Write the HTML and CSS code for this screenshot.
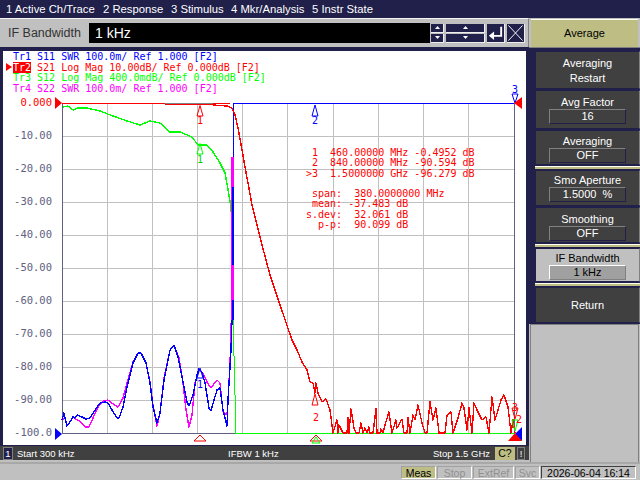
FILE: index.html
```html
<!DOCTYPE html>
<html lang="en">
<head>
<meta charset="utf-8">
<title>Network Analyzer</title>
<link rel="stylesheet" href="styles.css">
</head>
<body>
<div class="app">
  <nav class="menu">
    <span class="menu-item m1">1 Active Ch/Trace</span>
    <span class="menu-item m2">2 Response</span>
    <span class="menu-item m3">3 Stimulus</span>
    <span class="menu-item m4">4 Mkr/Analysis</span>
    <span class="menu-item">5 Instr State</span>
  </nav>
  <div class="main">
    <div class="left">
      <div class="entry">
        <span class="entry-label">IF Bandwidth</span>
        <span class="entry-field">1 kHz</span>
        <div class="spin narrow">
          <span class="spin-btn"><svg viewBox="0 0 5 3" class="tri"><path d="M0 3L2.5 0L5 3z"/></svg></span>
          <span class="spin-btn"><svg viewBox="0 0 5 3" class="tri"><path d="M0 0L2.5 3L5 0z"/></svg></span>
        </div>
        <div class="spin wide">
          <span class="spin-btn"><svg viewBox="0 0 5 3" class="tri"><path d="M0 3L2.5 0L5 3z"/></svg></span>
          <span class="spin-btn"><svg viewBox="0 0 5 3" class="tri"><path d="M0 0L2.5 3L5 0z"/></svg></span>
        </div>
        <span class="icon-btn"><svg viewBox="0 0 17 19" class="icon"><path d="M14.5 3V12.5H6" fill="none" stroke="#fff" stroke-width="2"/><path d="M1.5 12.5L7 8V17z" fill="#fff"/></svg></span>
        <span class="icon-btn"><svg viewBox="0 0 17 19" class="icon"><path d="M1 1.500L16 17.500M16 1.500L1 17.500" stroke="#fff" stroke-width="1" fill="none"/></svg></span>
      </div>
      <div class="chart">
        <svg class="plot" viewBox="3 51 523 394" width="523" height="394">
          <g class="grid">
            <path d="M107.500 103V433M152.500 103V433M197.500 103V433M242.500 103V433M287.500 103V433M333.500 103V433M378.500 103V433M423.500 103V433M468.500 103V433"/>
            <path d="M62 136.500H514M62 169.500H514M62 202.500H514M62 235.500H514M62 268.500H514M62 301.500H514M62 334.500H514M62 367.500H514M62 400.500H514"/>
          </g>
          <path class="axis" d="M62.500 103V433.500H514.500V103"/>
          <g class="scale">
            <text class="zero" x="52" y="106">0.000</text>
            <text x="52" y="139">-10.00</text>
            <text x="52" y="172">-20.00</text>
            <text x="52" y="205">-30.00</text>
            <text x="52" y="238">-40.00</text>
            <text x="52" y="271">-50.00</text>
            <text x="52" y="304">-60.00</text>
            <text x="52" y="337">-70.00</text>
            <text x="52" y="370">-80.00</text>
            <text x="52" y="403">-90.00</text>
            <text x="52" y="436">-100.0</text>
          </g>
          <path class="flat red" d="M62 103.500H230"/>
          <path class="flat gray" d="M165 103.500H213"/>
          <path class="flat red" d="M165 104.500H213"/>
          <path class="flat blue" d="M233 103.500H514"/>
          <polyline class="line green" points="63,107 68,106 73,110 78,108 87,108 100,111 113,116 127,121 140,125 150,121 160,123 170,132 180,132 192,137 198,145 207,145 213,152 220,163 225,173 229,195 231,208 232,225 232,320"/>
          <polyline class="line magenta" points="62,420 65,418 67,426 70,422 73,417 75,419 80,421 85,427 89,427 93,418 98,407 103,401 108,400 113,404 118,407 123,398 127,383 133,362 138,353 141,353 146,363 150,382 153,405 157,426 160,413 164,378 170,350 174,345 179,358 183,383 186,410 189,427 192,415 195,383 199,370 203,373 207,382 211,388 217,380 220,383 223,412 227,415 229,383 231,340 232,262 232,157"/>
          <polyline class="line blue" points="62,420 64,413 65,418 67,426 70,422 73,417 75,418 77,415 82,417 86,419 90,418 94,412 100,403 105,402 108,403 112,410 117,418 119,418 123,407 127,387 133,363 138,353 141,353 146,363 150,383 153,407 157,423 160,413 164,380 170,350 174,345 178,357 183,382 187,402 189,406 193,395 197,375 199,369 202,372 205,383 209,408 211,411 214,400 217,390 220,388 223,410 227,426 228,400 231,350 232,320"/>
          <path class="bar blue" d="M233 103V157"/>
          <path class="wide-bar blue" d="M233 157V320"/>
          <path class="wide-bar magenta" d="M233 157V187M233 265V300"/>
          <path class="flat green" d="M233.500 320V356"/>
          <path class="flat green" d="M234.500 356V395M235.500 395V433.500"/>
          <path class="flat green" d="M235 433.500H515"/>
          <polyline class="line red" points="213,105 227,106 232,108 235,115 238,128 242,150 245,167 248,183 252,205 257,225 262,245 270,275 280,305 292,340 297,350 302,362 307,370 310,382 313,383 315,393 316,383 318,393 322,402 326,399 330,410 333,433 337,420 338,433 339,425 343,433 347,433 348,418 349,433 351,409 354,428 356,433 359,433 361,423 363,433 365,428 367,433 369,427 370,433 373,433 376,409 377,433 380,433 381,429 383,433 385,425 389,412 392,433 396,420 397,428 402,419 404,433 407,433 408,418 410,433 413,415 415,420 418,405 422,423 425,433 427,433 430,402 433,420 436,408 439,433 445,433 447,415 451,412 453,433 458,418 462,403 464,408 467,430 469,408 472,433 474,403 477,410 482,420 486,417 489,433 492,397 495,420 501,400 504,395 508,407 511,433 513,420 515,433"/>
          <g class="mk">
            <path class="s-red" d="M200 105.500L197 116H203z"/><text class="t-red" x="200" y="124">1</text>
            <path class="s-green" d="M200 143.500L197 154H203z"/><text class="t-green" x="200" y="163">1</text>
            <path class="s-blue" d="M200 368L197 378H203z"/><text class="t-blue" x="200" y="388">1</text>
            <path class="s-blue" d="M315 105L312 116H318z"/><text class="t-blue" x="315" y="124">2</text>
            <path class="s-red" d="M315 394L312 405H318z"/><text class="t-red" x="316" y="421">2</text>
            <text class="t-blue" x="515" y="93">3</text>
            <path class="s-blue" d="M515 103L512 94H518z"/>
            <text class="t-red" x="515" y="411">3</text>
            <path class="s-red" d="M515 419L512 408H518z"/>
            <path class="s-green" d="M515 431L512 420H518z"/>
            <text class="t-red" x="519" y="423">2</text>
          </g>
          <path class="s-red" d="M200 435L194 441H206z"/>
          <path class="s-red" d="M316 435L310 441H322z"/>
          <path class="s-green" d="M316 437L312 443H320z"/>
          <path class="f-red" d="M55 97L62 103L55 109z"/>
          <path class="f-red" d="M522 97L514 103L522 109z"/>
          <path class="f-blue" d="M55 428L62 434L55 440z"/>
          <path class="f-blue" d="M522 427L514 435L522 441z"/>
          <path class="f-red" d="M515 433L508 441H522z"/>
        </svg>
        <div class="legend">
          <div class="c-blue">Tr1 S11 SWR 100.0m/ Ref 1.000 [F2]</div>
          <div class="c-red"><span class="active">Tr2</span> S21 Log Mag 10.00dB/ Ref 0.000dB [F2]</div>
          <div class="c-green">Tr3 S12 Log Mag 400.0mdB/ Ref 0.000dB [F2]</div>
          <div class="c-magenta">Tr4 S22 SWR 100.0m/ Ref 1.000 [F2]</div>
        </div>
        <pre class="readout"> 1  460.00000 MHz -0.4952 dB
 2  840.00000 MHz -90.594 dB
&gt;3  1.5000000 GHz -96.279 dB

 span:  380.0000000 MHz
 mean: -37.483 dB
s.dev:  32.061 dB
  p-p:  90.099 dB</pre>
      </div>
      <div class="chanbar">
        <span class="chan-no">1</span>
        <span class="chan-start">Start 300 kHz</span>
        <span class="chan-ifbw">IFBW 1 kHz</span>
        <span class="chan-stop">Stop 1.5 GHz</span>
        <span class="chan-cal">C?</span>
        <span class="chan-warn">!</span>
      </div>
    </div>
    <div class="side">
      <div class="softkey-title"><span class="title-key">Average</span></div>
      <div class="side-body">
        <div class="strip"></div>
        <div class="keys">
          <div class="key k38 two">Averaging<br>Restart</div>
          <div class="key k39 pad4">Avg Factor<span class="val">16</span></div>
          <div class="key k35 pad3">Averaging<span class="val">OFF</span></div>
          <div class="sep"></div>
          <div class="key k36 pad2">Smo Aperture<span class="val">1.5000&nbsp; %</span></div>
          <div class="key k36 pad4">Smoothing<span class="val">OFF</span></div>
          <div class="sep"></div>
          <div class="key k34 pad2 sel">IF Bandwidth<span class="val">1 kHz</span></div>
          <div class="sep"></div>
          <div class="key k36 single">Return</div>
        </div>
      </div>
      <div class="side-fill"></div>
    </div>
  </div>
  <footer class="status">
    <span class="st meas">Meas</span>
    <span class="st w35 off">Stop</span>
    <span class="st w41 off">ExtRef</span>
    <span class="st w25 off">Svc</span>
    <span class="st clock">2026-06-04 16:14</span>
  </footer>
</div>
</body>
</html>
```
FILE: styles.css
```css
* { box-sizing: border-box; }
html, body { margin: 0; padding: 0; }
body { background: #c0c0c0; font-family: "Liberation Sans", Arial, sans-serif; font-size: 11px; overflow: hidden; }
.app { width: 640px; height: 480px; display: flex; flex-direction: column; overflow: hidden; }

.menu { height: 18px; background: #20204a; color: #fff; display: flex; align-items: center; padding-left: 6px; font-size: 11.300px; white-space: nowrap; }
.m1 { width: 97px; }
.m2 { width: 68px; }
.m3 { width: 60px; }
.m4 { width: 81px; }

.main { flex: 1; display: flex; min-height: 0; }
.left { width: 529px; display: flex; flex-direction: column; }

.entry { height: 29px; background: #c0c0c0; border-top: 1px solid #f4f4f4; border-right: 1px solid #808080; display: flex; align-items: center; padding-left: 8px; }
.entry-label { width: 81px; font-size: 12.500px; color: #333; white-space: nowrap; }
.entry-field { width: 341px; height: 20px; background: #000; color: #fff; font-size: 14px; line-height: 20px; padding-left: 6px; }
.spin { display: flex; flex-direction: column; gap: 1px; height: 19px; margin-left: 1px; }
.narrow { width: 13px; }
.wide { width: 39px; margin-left: 2px; }
.spin-btn { flex: 1; background: #20204a; border: 1px solid #eee; border-width: 0 1px 1px 0; display: flex; align-items: center; justify-content: center; }
.tri { width: 5px; height: 3px; fill: #fff; }
.icon-btn { width: 18px; height: 19px; margin-left: 2px; background: #20204a; border-right: 1px solid #eee; border-bottom: 1px solid #eee; display: flex; }
.icon { width: 17px; height: 18px; }

.chart { position: relative; height: 398px; background: #fff; border: solid #20204a; border-width: 4px 3px 0 3px; }
.plot { position: absolute; left: 0; top: 0; font-family: "DejaVu Sans Mono", monospace; font-size: 10px; }
.grid path { stroke: #c0c0c0; stroke-width: 1; fill: none; shape-rendering: crispEdges; }
.axis { stroke: #606080; stroke-width: 1; fill: none; shape-rendering: crispEdges; }
.scale text { text-anchor: end; fill: #606080; font-size: 10.500px; }
.scale .zero { fill: #f00; }
.line { fill: none; stroke-width: 1.400; shape-rendering: crispEdges; stroke-linejoin: round; }
.flat { fill: none; stroke-width: 1; shape-rendering: crispEdges; }
.bar { fill: none; stroke-width: 1; shape-rendering: crispEdges; }
.wide-bar { fill: none; stroke-width: 2; shape-rendering: crispEdges; }
.red { stroke: #f00; }
.gray { stroke: #808080; }
.blue { stroke: #00f; }
.green { stroke: #0f0; }
.magenta { stroke: #f0f; }
.mk text { text-anchor: middle; font-size: 10px; }
.t-red { fill: #f00; }
.t-green { fill: #0c0; }
.t-blue { fill: #00f; }
.s-red, .s-green, .s-blue { fill: none; stroke-width: 1; }
.s-red { stroke: #f00; }
.s-green { stroke: #0f0; }
.s-blue { stroke: #00f; }
.f-red { fill: #f00; }
.f-blue { fill: #00f; }

.legend { position: relative; margin: 1px 0 0 10px; font-family: "DejaVu Sans Mono", monospace; font-size: 10px; line-height: 10.500px; white-space: nowrap; }
.c-blue { color: #00f; }
.c-red { color: #f00; }
.c-green { color: #0f0; }
.c-magenta { color: #f0f; }
.active { background: #f00; color: #fff; position: relative; }
.active::before { content: ""; position: absolute; left: -7px; top: 1px; border: 4px solid transparent; border-left: 6px solid #f00; border-right: 0; }
.readout { position: absolute; left: 303px; top: 97px; margin: 0; color: #f00; font-family: "DejaVu Sans Mono", monospace; font-size: 10px; line-height: 10.300px; }

.chanbar { height: 15px; background: #404040; border-top: 1px solid #20204a; color: #fff; display: flex; align-items: center; font-size: 9.500px; white-space: nowrap; padding-left: 3px; }
.chan-no { width: 10px; height: 13px; border: 1px solid #808080; background: #20204a; text-align: center; line-height: 11px; }
.chan-start { width: 211px; margin-left: 4px; }
.chan-ifbw { width: 205px; }
.chan-stop { width: 62px; }
.chan-cal { width: 20px; height: 13px; background: #bdbd84; color: #000; text-align: center; line-height: 13px; font-size: 10.500px; }
.chan-warn { width: 8px; height: 13px; margin-left: 2px; border: 1px solid #808080; text-align: center; line-height: 11px; }

.side { flex: 1; display: flex; flex-direction: column; }
.softkey-title { height: 29px; padding: 1px 2px 0 2px; }
.title-key { display: block; height: 28px; line-height: 27px; background: #bdbd84; color: #000; text-align: center; border-top: 1px solid #fffff0; font-size: 11px; }
.side-body { display: flex; background: #20204a; padding-top: 3px; border-top: 1px solid #808080; }
.strip { width: 6px; }
.keys { flex: 1; display: flex; flex-direction: column; }
.key { background: #404040; color: #fff; text-align: center; font-size: 11px; border: 1px solid #20204a; border-right-color: #808080; display: flex; flex-direction: column; align-items: center; line-height: 14px; margin-bottom: 1px; }
.k34 { height: 34px; }
.k35 { height: 35px; }
.k36 { height: 36px; }
.k38 { height: 38px; }
.k39 { height: 39px; }
.pad2 { padding-top: 2px; }
.pad3 { padding-top: 3px; }
.pad4 { padding-top: 4px; }
.two { display: block; line-height: 15px; padding-top: 4px; }
.single { justify-content: center; }
.val { display: block; width: 77px; height: 15px; line-height: 13px; border: 1px solid; border-color: #808080 #20204a #20204a #808080; }
.sep { height: 3px; background: #bdbd84; border-top: 1px solid #fffff0; margin-bottom: 1px; }
.sel { background: #c0c0c0; color: #000; }
.sel .val { background: #a0a0a0; border-color: #fff #808080 #808080 #fff; }
.side-fill { flex: 1; background: #c0c0c0; border: 1px solid #808080; border-bottom: 0; margin: 0 1px; }

.status { height: 18px; background: #c0c0c0; border-top: 2px solid #a8a8a8; display: flex; justify-content: flex-end; align-items: center; gap: 1px; padding-right: 4px; font-size: 10.500px; white-space: nowrap; }
.st { height: 13px; line-height: 12px; text-align: center; border: 1px solid; border-color: #a0a0a0 #fff #fff #a0a0a0; }
.meas { width: 35px; background: #bdbd84; color: #000; }
.w35 { width: 35px; }
.w41 { width: 41px; }
.w25 { width: 25px; }
.off { color: #909090; }
.clock { width: 95px; color: #000; border-color: #404040 #fff #fff #404040; }
```
